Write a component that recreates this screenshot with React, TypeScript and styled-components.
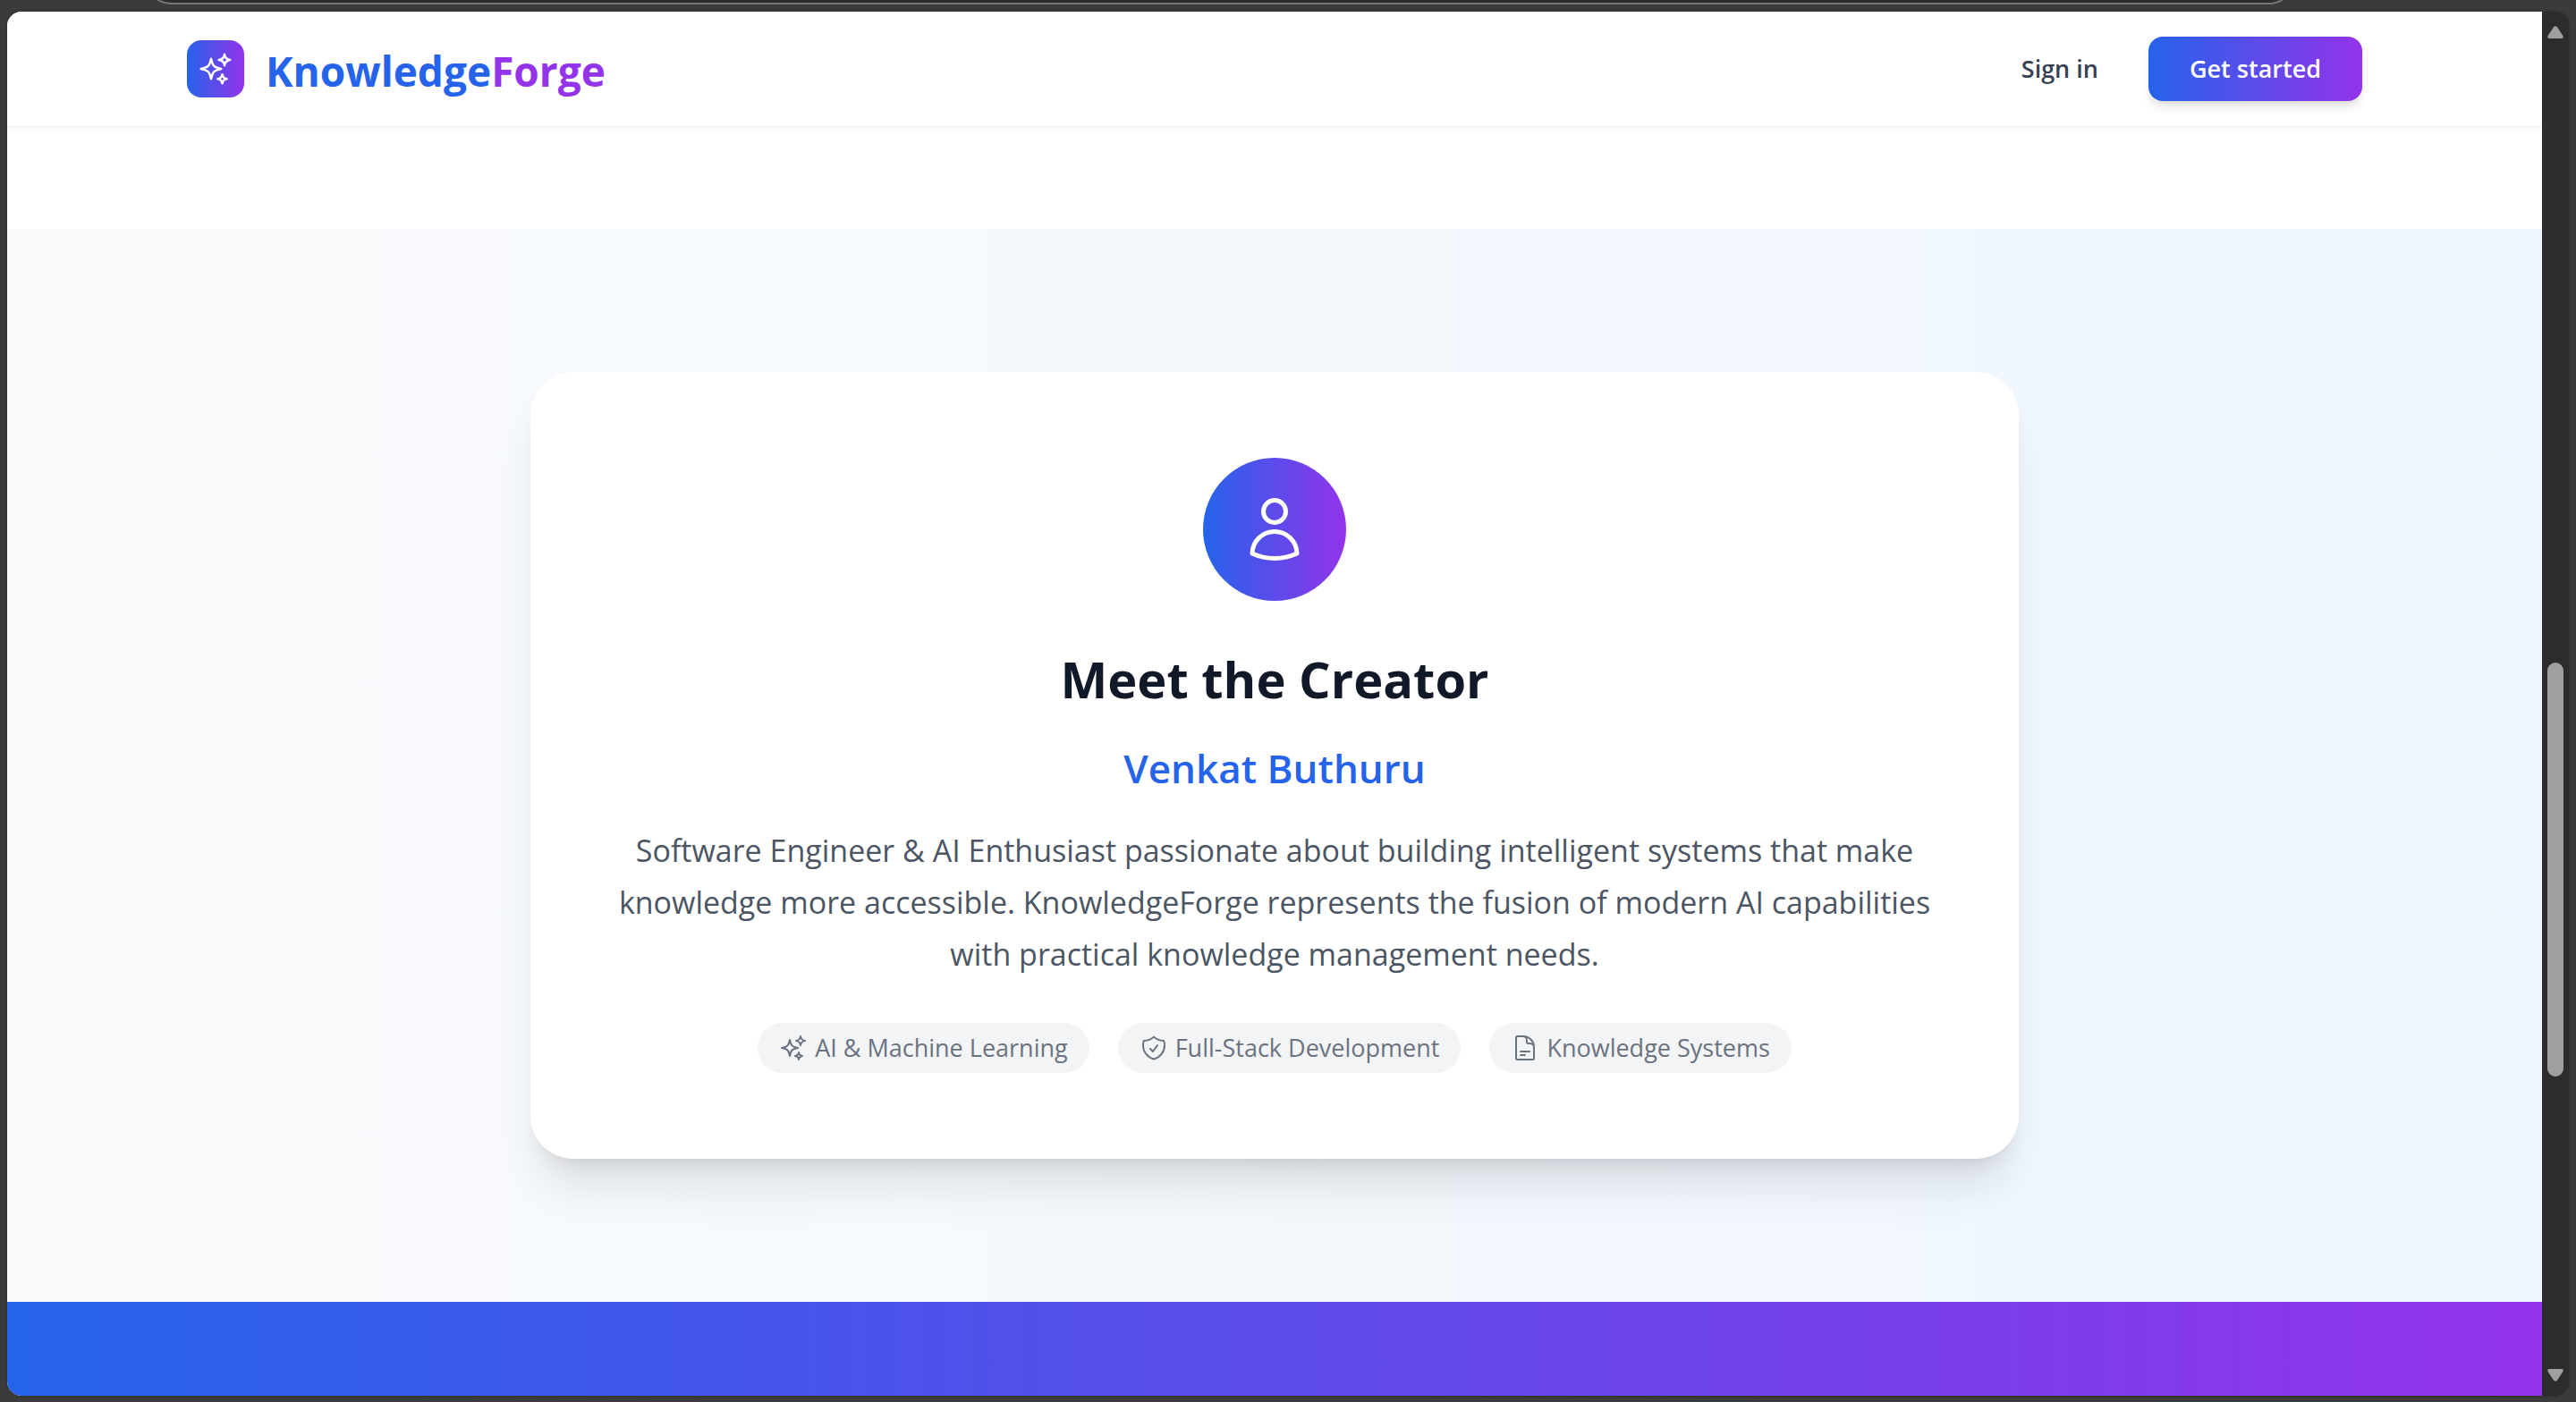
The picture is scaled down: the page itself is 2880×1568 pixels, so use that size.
import React from "react";
import styled, { createGlobalStyle } from "styled-components";

const brand = "linear-gradient(to right, #2563eb, #9333ea)";

const GlobalStyle = createGlobalStyle`
  *, *::before, *::after { box-sizing: border-box; }
  body {
    margin: 0;
    background: #3b3b3b;
    font-family: "Open Sans", "Noto Sans", sans-serif;
    -webkit-font-smoothing: antialiased;
  }
  h2, p, ul { margin: 0; padding: 0; }
`;

const Browser = styled.div`
  display: flex;
  flex-direction: column;
  height: 100vh;
  padding: 0 8px 7px;
`;

const Toolbar = styled.div`
  flex: none;
  display: flex;
  align-items: flex-end;
  height: 13px;
  padding: 0 304px 8px 152px;
  overflow: hidden;
`;

const AddressBar = styled.div`
  flex: 1;
  height: 64px;
  background: #2d2d2d;
  border: 2px solid #757575;
  border-radius: 32px;
`;

const Viewport = styled.div`
  flex: 1;
  min-height: 0;
  display: flex;
  overflow: hidden;
  border-radius: 16px;
  background: #2c2c2c;
  box-shadow: 0 0 3px #262626;
`;

const Page = styled.div`
  flex: 1;
  min-width: 0;
  display: flex;
  flex-direction: column;
  background: #fff;
`;

const ScrollTrack = styled.div`
  flex: none;
  width: 30px;
  padding: 16px 0;
  display: flex;
  flex-direction: column;
  align-items: center;
`;

const Arrow = styled.svg`
  flex: none;
  display: block;
  width: 18px;
  height: 14px;
  fill: #9f9f9f;
`;

const Spacer = styled.div<{ $grow: number }>`
  flex: ${(p) => p.$grow} 0 0;
`;

const Thumb = styled.div`
  width: 18px;
  flex: 463 0 0;
  border-radius: 9px;
  background: #9f9f9f;
`;

const Header = styled.header`
  position: relative;
  background: #fff;
  border-bottom: 1px solid #f3f4f6;
  box-shadow: 0 2px 4px rgba(0, 0, 0, 0.04);
`;

const Nav = styled.nav`
  display: flex;
  align-items: center;
  justify-content: space-between;
  max-width: 2560px;
  height: 128px;
  margin: 0 auto;
  padding: 0 64px;
`;

const Logo = styled.a`
  display: flex;
  align-items: center;
  gap: 24px;
  text-decoration: none;
  font-size: 46px;
  line-height: 64px;
  font-weight: 700;
  color: #2563eb;
`;

const LogoMark = styled.span`
  display: flex;
  align-items: center;
  justify-content: center;
  width: 64px;
  height: 64px;
  border-radius: 16px;
  background: ${brand};
  color: #fff;
`;

const Wordmark = styled.span`
  padding-top: 4px;
`;

const Accent = styled.span`
  color: #9333ea;
`;

const Actions = styled.div`
  display: flex;
  align-items: center;
  gap: 56px;
  font-size: 27px;
  line-height: 40px;
  font-weight: 600;
`;

const SignIn = styled.a`
  color: #374151;
  text-decoration: none;
`;

const GetStarted = styled.button`
  padding: 16px 46px;
  border: 0;
  border-radius: 16px;
  background: ${brand};
  color: #fff;
  font: inherit;
  cursor: pointer;
  box-shadow: 0 8px 12px -2px rgba(0, 0, 0, 0.1), 0 4px 8px -4px rgba(0, 0, 0, 0.1);
`;

const Creator = styled.section`
  margin-top: 114px;
  padding: 160px 64px;
  background: linear-gradient(to right, #f9fafb, #eff6ff);
`;

const Card = styled.article`
  display: flex;
  flex-direction: column;
  align-items: center;
  max-width: 1664px;
  margin: 0 auto;
  padding: 96px;
  border-radius: 48px;
  background: #fff;
  text-align: center;
  box-shadow: 0 40px 50px -10px rgba(0, 0, 0, 0.1), 0 16px 20px -12px rgba(0, 0, 0, 0.1);
`;

const Avatar = styled.div`
  display: flex;
  align-items: center;
  justify-content: center;
  width: 160px;
  height: 160px;
  margin-bottom: 51px;
  border-radius: 50%;
  background: ${brand};
  color: #fff;
`;

const Title = styled.h2`
  margin-bottom: 32px;
  font-size: 56px;
  line-height: 72px;
  font-weight: 700;
  color: #111827;
`;

const Name = styled.p`
  margin-bottom: 31px;
  font-size: 44px;
  line-height: 64px;
  font-weight: 600;
  color: #2563eb;
`;

const Bio = styled.p`
  margin-bottom: 48px;
  font-size: 34px;
  line-height: 58px;
  color: #4b5563;
`;

const Tags = styled.ul`
  display: flex;
  flex-wrap: wrap;
  justify-content: center;
  gap: 32px;
  list-style: none;
`;

const Tag = styled.li`
  display: flex;
  align-items: center;
  gap: 8px;
  padding: 8px 24px;
  border-radius: 28px;
  background: #f3f4f6;
  font-size: 27px;
  line-height: 40px;
  color: #6b7280;
`;

const Banner = styled.section`
  flex: 1;
  background: ${brand};
`;

const IconSvg = styled.svg<{ $size: number }>`
  flex: none;
  display: block;
  width: ${(p) => p.$size}px;
  height: ${(p) => p.$size}px;
  fill: none;
  stroke: currentColor;
  stroke-width: 1.5;
  stroke-linecap: round;
  stroke-linejoin: round;
`;

const icons = {
  sparkles:
    "M9.813 15.904 9 18.75l-.813-2.846a4.5 4.5 0 0 0-3.09-3.09L2.25 12l2.846-.813a4.5 4.5 0 0 0 3.09-3.09L9 5.25l.813 2.846a4.5 4.5 0 0 0 3.09 3.09L15.75 12l-2.846.813a4.5 4.5 0 0 0-3.09 3.09ZM18.259 8.715 18 9.75l-.259-1.035a3.375 3.375 0 0 0-2.455-2.456L14.25 6l1.036-.259a3.375 3.375 0 0 0 2.455-2.456L18 2.25l.259 1.035a3.375 3.375 0 0 0 2.456 2.456L21.75 6l-1.035.259a3.375 3.375 0 0 0-2.456 2.456ZM16.894 20.567 16.5 21.75l-.394-1.183a2.25 2.25 0 0 0-1.423-1.423L13.5 18.75l1.183-.394a2.25 2.25 0 0 0 1.423-1.423l.394-1.183.394 1.183a2.25 2.25 0 0 0 1.423 1.423l1.183.394-1.183.394a2.25 2.25 0 0 0-1.423 1.423Z",
  user: "M15.75 6a3.75 3.75 0 1 1-7.5 0 3.75 3.75 0 0 1 7.5 0ZM4.501 20.118a7.5 7.5 0 0 1 14.998 0A17.933 17.933 0 0 1 12 21.75c-2.676 0-5.216-.584-7.499-1.632Z",
  shield:
    "M9 12.75 11.25 15 15 9.75m-3-7.036A11.959 11.959 0 0 1 3.598 6 11.99 11.99 0 0 0 3 9.749c0 5.592 3.824 10.29 9 11.623 5.176-1.332 9-6.03 9-11.622 0-1.31-.21-2.571-.598-3.751h-.152c-3.196 0-6.1-1.248-8.25-3.285Z",
  document:
    "M19.5 14.25v-2.625a3.375 3.375 0 0 0-3.375-3.375h-1.5A1.125 1.125 0 0 1 13.5 7.125v-1.5a3.375 3.375 0 0 0-3.375-3.375H8.25m0 12.75h7.5m-7.5 3H12M10.5 2.25H5.625c-.621 0-1.125.504-1.125 1.125v17.25c0 .621.504 1.125 1.125 1.125h12.75c.621 0 1.125-.504 1.125-1.125V11.25a9 9 0 0 0-9-9Z",
};

type IconName = keyof typeof icons;

function Icon({ name, size }: { name: IconName; size: number }) {
  return (
    <IconSvg viewBox="0 0 24 24" $size={size} aria-hidden="true">
      <path d={icons[name]} />
    </IconSvg>
  );
}

const tags: { icon: IconName; label: string }[] = [
  { icon: "sparkles", label: "AI & Machine Learning" },
  { icon: "shield", label: "Full-Stack Development" },
  { icon: "document", label: "Knowledge Systems" },
];

export default function App() {
  return (
    <Browser>
      <GlobalStyle />
      <Toolbar>
        <AddressBar />
      </Toolbar>
      <Viewport>
        <Page>
          <Header>
            <Nav>
              <Logo href="#">
                <LogoMark>
                  <Icon name="sparkles" size={40} />
                </LogoMark>
                <Wordmark>
                  Knowledge<Accent>Forge</Accent>
                </Wordmark>
              </Logo>
              <Actions>
                <SignIn href="#">Sign in</SignIn>
                <GetStarted type="button">Get started</GetStarted>
              </Actions>
            </Nav>
          </Header>
          <Creator>
            <Card>
              <Avatar>
                <Icon name="user" size={80} />
              </Avatar>
              <Title>Meet the Creator</Title>
              <Name>Venkat Buthuru</Name>
              <Bio>
                Software Engineer &amp; AI Enthusiast passionate about building intelligent systems that make
                knowledge more accessible. KnowledgeForge represents the fusion of modern AI capabilities with
                practical knowledge management needs.
              </Bio>
              <Tags>
                {tags.map((tag) => (
                  <Tag key={tag.label}>
                    <Icon name={tag.icon} size={32} />
                    {tag.label}
                  </Tag>
                ))}
              </Tags>
            </Card>
          </Creator>
          <Banner />
        </Page>
        <ScrollTrack>
          <Arrow viewBox="0 0 18 14">
            <path d="M7 1.3Q9-1 11 1.3L17.4 11Q18.4 14 16 14H2Q-.4 14 .6 11Z" />
          </Arrow>
          <Spacer $grow={698} />
          <Thumb />
          <Spacer $grow={327} />
          <Arrow viewBox="0 0 18 14">
            <path d="M7 12.7Q9 15 11 12.7L17.4 3Q18.4 0 16 0H2Q-.4 0 .6 3Z" />
          </Arrow>
        </ScrollTrack>
      </Viewport>
    </Browser>
  );
}
